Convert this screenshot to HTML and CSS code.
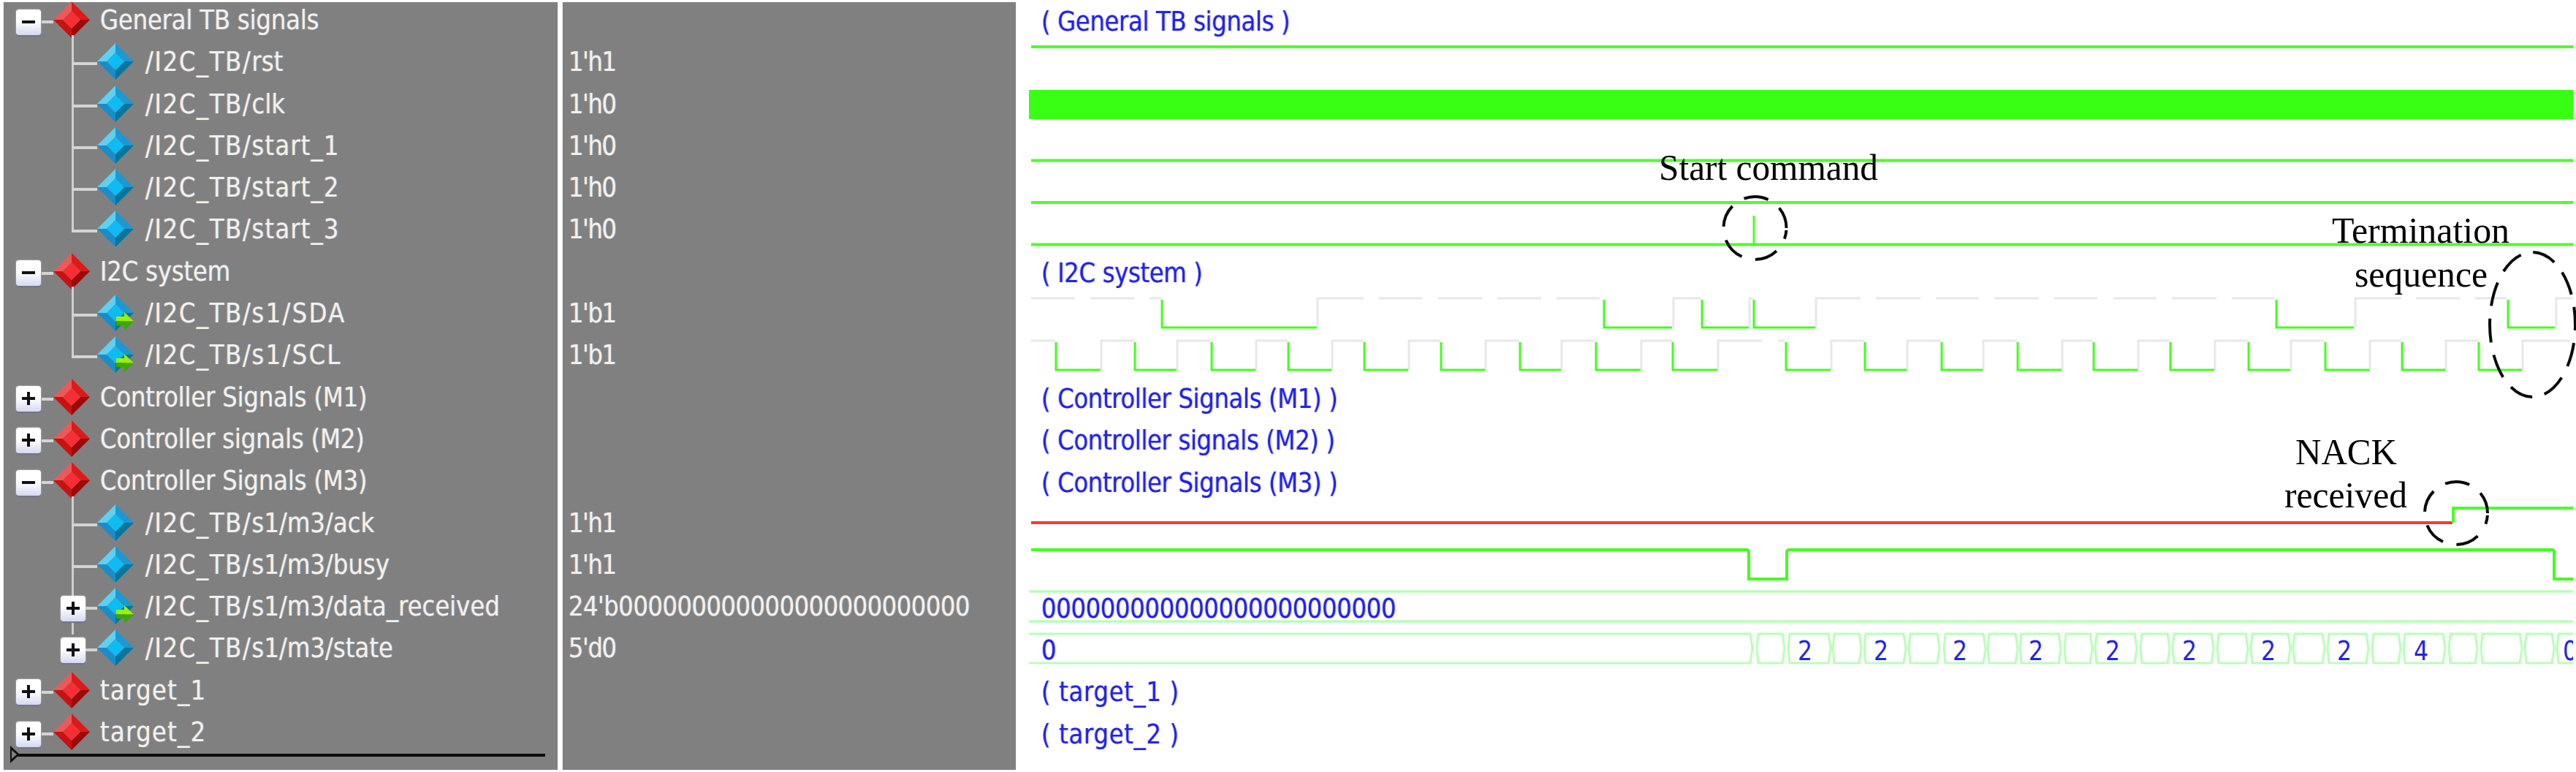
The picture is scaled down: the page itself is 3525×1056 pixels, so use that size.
FILE: index.html
```html
<!DOCTYPE html>
<html lang="en">
<head>
<meta charset="utf-8">
<title>I2C waveform</title>
<link rel="stylesheet" href="styles.css">
</head>
<body>
<svg class="defs" width="0" height="0" aria-hidden="true">
  <symbol id="gem-red" viewBox="0 0 50 50">
    <path fill="#ea5a5a" d="M25 0 0 25 13 25 25 13z"/>
    <path fill="#dc1a1a" d="M25 0 50 25 37 25 25 13z"/>
    <path fill="#9c0a0a" d="M50 25 25 50 25 37 37 25z"/>
    <path fill="#c81212" d="M0 25 25 50 25 37 13 25z"/>
    <path fill="#f52f35" d="M25 13 37 25 25 37 13 25z"/>
  </symbol>
  <symbol id="gem-blue" viewBox="0 0 50 50">
    <path fill="#5fd0f2" d="M25 0 0 25 13 25 25 13z"/>
    <path fill="#1c98d2" d="M25 0 50 25 37 25 25 13z"/>
    <path fill="#07769f" d="M50 25 25 50 25 37 37 25z"/>
    <path fill="#1a8cc8" d="M0 25 25 50 25 37 13 25z"/>
    <path fill="#0cbcf2" d="M25 13 37 25 25 37 13 25z"/>
  </symbol>
  <symbol id="gem-arrow" viewBox="0 0 50 50">
    <path fill="#5fd0f2" d="M25 0 0 25 13 25 25 13z"/>
    <path fill="#1c98d2" d="M25 0 50 25 37 25 25 13z"/>
    <path fill="#07769f" d="M50 25 25 50 25 37 37 25z"/>
    <path fill="#1a8cc8" d="M0 25 25 50 25 37 13 25z"/>
    <path fill="#0cbcf2" d="M25 13 37 25 25 37 13 25z"/>
    <path fill="#9cf000" d="M26 30H37V24L50 36.5H26z"/>
    <path fill="#3aa800" d="M26 36.5H50L37 49V42H26z"/>
  </symbol>
</svg>

<main class="page">
  <section class="panel names">
    <div class="rows">
      <div class="row group"><div class="stub open"><span class="toggle minus"></span></div><svg class="gem"><use href="#gem-red"/></svg><span class="label">General TB signals</span></div>
      <div class="row child"><div class="branch"></div><svg class="gem"><use href="#gem-blue"/></svg><span class="label"><span class="prefix">/I2C_TB/</span>rst</span></div>
      <div class="row child"><div class="branch"></div><svg class="gem"><use href="#gem-blue"/></svg><span class="label"><span class="prefix">/I2C_TB/</span>clk</span></div>
      <div class="row child"><div class="branch"></div><svg class="gem"><use href="#gem-blue"/></svg><span class="label"><span class="prefix">/I2C_TB/</span><span class="wide">start_1</span></span></div>
      <div class="row child"><div class="branch"></div><svg class="gem"><use href="#gem-blue"/></svg><span class="label"><span class="prefix">/I2C_TB/</span><span class="wide">start_2</span></span></div>
      <div class="row child"><div class="branch last"></div><svg class="gem"><use href="#gem-blue"/></svg><span class="label"><span class="prefix">/I2C_TB/</span><span class="wide">start_3</span></span></div>
      <div class="row group"><div class="stub open"><span class="toggle minus"></span></div><svg class="gem"><use href="#gem-red"/></svg><span class="label">I2C system</span></div>
      <div class="row child"><div class="branch"></div><svg class="gem"><use href="#gem-arrow"/></svg><span class="label"><span class="prefix">/I2C_TB/</span><span class="wider">s1/SDA</span></span></div>
      <div class="row child"><div class="branch last"></div><svg class="gem"><use href="#gem-arrow"/></svg><span class="label"><span class="prefix">/I2C_TB/</span><span class="wider">s1/SCL</span></span></div>
      <div class="row group"><div class="stub"><span class="toggle plus"></span></div><svg class="gem"><use href="#gem-red"/></svg><span class="label">Controller Signals (M1)</span></div>
      <div class="row group"><div class="stub"><span class="toggle plus"></span></div><svg class="gem"><use href="#gem-red"/></svg><span class="label">Controller signals (M2)</span></div>
      <div class="row group"><div class="stub open"><span class="toggle minus"></span></div><svg class="gem"><use href="#gem-red"/></svg><span class="label">Controller Signals (M3)</span></div>
      <div class="row child"><div class="branch"></div><svg class="gem"><use href="#gem-blue"/></svg><span class="label"><span class="prefix">/I2C_TB/</span>s1/m3/ack</span></div>
      <div class="row child"><div class="branch"></div><svg class="gem"><use href="#gem-blue"/></svg><span class="label"><span class="prefix">/I2C_TB/</span>s1/m3/busy</span></div>
      <div class="row child"><div class="branch"><span class="toggle plus sub"></span></div><svg class="gem"><use href="#gem-arrow"/></svg><span class="label"><span class="prefix">/I2C_TB/</span>s1/m3/data_received</span></div>
      <div class="row child"><div class="branch last"><span class="toggle plus sub"></span></div><svg class="gem"><use href="#gem-blue"/></svg><span class="label"><span class="prefix">/I2C_TB/</span>s1/m3/state</span></div>
      <div class="row group"><div class="stub"><span class="toggle plus"></span></div><svg class="gem"><use href="#gem-red"/></svg><span class="label target">target_1</span></div>
      <div class="row group"><div class="stub"><span class="toggle plus"></span></div><svg class="gem"><use href="#gem-red"/></svg><span class="label target">target_2</span></div>
    </div>
    <div class="cursor"><span class="cursor-mark"></span></div>
  </section>

  <section class="panel values">
    <div class="rows">
      <div class="row"></div>
      <div class="row"><span class="label">1'h1</span></div>
      <div class="row"><span class="label">1'h0</span></div>
      <div class="row"><span class="label">1'h0</span></div>
      <div class="row"><span class="label">1'h0</span></div>
      <div class="row"><span class="label">1'h0</span></div>
      <div class="row"></div>
      <div class="row"><span class="label">1'b1</span></div>
      <div class="row"><span class="label">1'b1</span></div>
      <div class="row"></div>
      <div class="row"></div>
      <div class="row"></div>
      <div class="row"><span class="label">1'h1</span></div>
      <div class="row"><span class="label">1'h1</span></div>
      <div class="row"><span class="label bits">24'b000000000000000000000000</span></div>
      <div class="row"><span class="label">5'd0</span></div>
    </div>
  </section>

  <section class="wave">
    <div class="rows">
      <div class="row"><span class="label">( General TB signals )</span></div>
      <div class="row"></div><div class="row"></div><div class="row"></div><div class="row"></div><div class="row"></div>
      <div class="row"><span class="label">( I2C system )</span></div>
      <div class="row"></div><div class="row"></div>
      <div class="row"><span class="label">( Controller Signals (M1) )</span></div>
      <div class="row"><span class="label">( Controller signals (M2) )</span></div>
      <div class="row"><span class="label">( Controller Signals (M3) )</span></div>
      <div class="row"></div><div class="row"></div>
      <div class="row"><span class="label bits">000000000000000000000000</span></div>
      <div class="row"><span class="label">0</span></div>
      <div class="row"><span class="label target">( target_1 )</span></div>
      <div class="row"><span class="label target">( target_2 )</span></div>
    </div>
  </section>
</main>

<svg class="traces" width="3525" height="1056" viewBox="0 0 3525 1056">
  <g class="soft">
    <rect class="clk" x="1408" y="123" width="2113" height="40"/>
    <path class="hi" d="M1411 64H3521M1411 219.5H3521M1411 277H3521M1411 334.5H3521"/>
    <path class="thin" d="M2400 295V334"/>

    <path class="idle" d="M1411 408H1471M1492 408H1552M1573 408H1590M1803 448V408H1866M1887 408H1946M1968 408H2028M2049 408H2109M2130 408H2189M2290 448V408H2328M2394 448V408H2399M2485 448V408H2546M2567 408H2628M2649 408H2708M2729 408H2790M2811 408H2870M2892 408H2951M2972 408H3033M3054 408H3113M3223 448V408H3286M3306 408H3366M3387 408H3430M3498 448V408H3521"/>
    <path class="low" d="M1590 410V448H1802M2195 410V448H2288M2329 410V448H2393M2400 410V448H2484M3115 410V448H3221M3432 410V448H3496"/>

    <path class="idle" d="M1411 466H1444M1507 506V466H1552M1611 506V466H1657M1719 506V466H1762M1823 506V466H1866M1928 506V466H1971M2033 506V466H2079M2137 506V466H2183M2246 506V466H2288M2351 506V466H2411M2433 466H2443M2506 506V466H2551M2610 506V466H2656M2714 506V466H2760M2822 506V466H2864M2926 506V466H2969M3031 506V466H3076M3135 506V466H3181M3243 506V466H3286M3347 506V466H3391M3452 506V466H3516"/>
    <path class="low" d="M1445 468V506H1506M1553 468V506H1610M1658 468V506H1718M1763 468V506H1822M1867 468V506H1927M1972 468V506H2032M2080 468V506H2136M2184 468V506H2245M2289 468V506H2350M2444 468V506H2505M2552 468V506H2609M2657 468V506H2713M2761 468V506H2821M2865 468V506H2925M2970 468V506H3030M3077 468V506H3134M3182 468V506H3242M3287 468V506H3346M3392 468V506H3451"/>

    <path class="red" d="M1411 715H3356"/>
    <path class="hi" d="M3357 715V695H3521"/>
    <path class="low busy" d="M1411 752H2391L2393 754V792H2445V754L2447 752H3493L3495 754V792H3521"/>

    <path class="bus" d="M1408 809H3521M1408 850H3521"/>
    <path class="bus state" d="M1408 867H2395l3 20-3 20H1408M2406 867H2439l3 20-3 20H2406l-2-20zM2449 867H2502l3 20-3 20H2449l-2-20zM2510 867H2544l3 20-3 20H2510l-2-20zM2553 867H2605l3 20-3 20H2553l-2-20zM2614 867H2651l3 20-3 20H2614l-2-20zM2662 867H2714l3 20-3 20H2662l-2-20zM2722 867H2758l3 20-3 20H2722l-2-20zM2766 867H2817l3 20-3 20H2766l-2-20zM2827 867H2860l3 20-3 20H2827l-2-20zM2869 867H2921l3 20-3 20H2869l-2-20zM2931 867H2966l3 20-3 20H2931l-2-20zM2975 867H3026l3 20-3 20H2975l-2-20zM3036 867H3073l3 20-3 20H3036l-2-20zM3082 867H3131l3 20-3 20H3082l-2-20zM3140 867H3178l3 20-3 20H3140l-2-20zM3187 867H3238l3 20-3 20H3187l-2-20zM3248 867H3282l3 20-3 20H3248l-2-20zM3291 867H3343l3 20-3 20H3291l-2-20zM3353 867H3387l3 20-3 20H3353l-2-20zM3397 867H3448l3 20-3 20H3397l-2-20zM3457 867H3492l3 20-3 20H3457l-2-20zM3521 867H3501l-2 20 2 20H3521"/>
  </g>

  <text class="digit" x="2470" y="903" textLength="20" lengthAdjust="spacingAndGlyphs">2</text>
  <text class="digit" x="2574" y="903" textLength="20" lengthAdjust="spacingAndGlyphs">2</text>
  <text class="digit" x="2682" y="903" textLength="20" lengthAdjust="spacingAndGlyphs">2</text>
  <text class="digit" x="2786" y="903" textLength="20" lengthAdjust="spacingAndGlyphs">2</text>
  <text class="digit" x="2891" y="903" textLength="20" lengthAdjust="spacingAndGlyphs">2</text>
  <text class="digit" x="2996" y="903" textLength="20" lengthAdjust="spacingAndGlyphs">2</text>
  <text class="digit" x="3104" y="903" textLength="20" lengthAdjust="spacingAndGlyphs">2</text>
  <text class="digit" x="3208" y="903" textLength="20" lengthAdjust="spacingAndGlyphs">2</text>
  <text class="digit" x="3313" y="903" textLength="20" lengthAdjust="spacingAndGlyphs">4</text>
  <text class="digit" x="3517" y="903" textLength="20" lengthAdjust="spacingAndGlyphs">0</text>
  <rect class="mask" x="3521" y="860" width="4" height="50"/>

  <ellipse class="ring round" cx="2401.5" cy="312" rx="43" ry="43"/>
  <ellipse class="ring tall" cx="3465.5" cy="444" rx="58.5" ry="99"/>
  <ellipse class="ring round" cx="3361" cy="702" rx="43" ry="43"/>

  <text class="note" x="2270" y="246" textLength="300" lengthAdjust="spacingAndGlyphs">Start command</text>
  <text class="note" x="3191" y="332" textLength="243" lengthAdjust="spacingAndGlyphs">Termination</text>
  <text class="note" x="3222" y="392" textLength="182" lengthAdjust="spacingAndGlyphs">sequence</text>
  <text class="note" x="3141" y="635" textLength="139" lengthAdjust="spacingAndGlyphs">NACK</text>
  <text class="note" x="3126" y="694" textLength="168" lengthAdjust="spacingAndGlyphs">received</text>
</svg>
</body>
</html>
```

FILE: styles.css
```css
* { box-sizing: border-box; }

html, body {
  margin: 0;
  background: #fff;
}

body {
  position: relative;
  width: 3525px;
  height: 1056px;
  overflow: hidden;
}

.defs { position: absolute; }

.page {
  display: flex;
  gap: 7px;
  height: 1056px;
  padding: 3px 0 3px 5px;
  font-family: "DejaVu Sans Condensed", "DejaVu Sans", sans-serif;
  font-stretch: condensed;
  font-size: 38px;
}

.panel {
  position: relative;
  background: #808080;
  box-shadow: 0 0 1px #aaa;
  height: 100%;
}

.names { width: 758px; }
.values { width: 620px; }
.wave { flex: 1; }

.rows { margin-top: -4.65px; }

.row {
  position: relative;
  display: flex;
  align-items: center;
  height: 57.3px;
}

.label {
  display: inline-block;
  white-space: nowrap;
  line-height: 40px;
  color: #f1f1f1;
  transform: scaleX(.947);
  transform-origin: left center;
  text-shadow: -1px 0 1px rgba(255, 190, 130, .55), 1px 0 1px rgba(130, 200, 255, .55);
}

.prefix { letter-spacing: 1.7px; }
.wide { letter-spacing: 1.2px; }
.wider { letter-spacing: 2.4px; }

.values .row { padding-left: 8px; }
.values .label { letter-spacing: -1.6px; }
.values .label.bits { letter-spacing: -.6px; }

.wave .rows { margin-top: -2.2px; }
.wave .row { padding-left: 28px; }
.wave .label {
  color: #2222ea;
  letter-spacing: -.4px;
  text-shadow: -1px 0 1px rgba(120, 120, 255, .45), 1px 0 1px rgba(120, 120, 255, .45);
}
.wave .label.bits { letter-spacing: -.4px; }
.wave .label.target { letter-spacing: .7px; }

.gem {
  flex: none;
  width: 50px;
  height: 50px;
  overflow: visible;
}

.group .label { margin-left: 14px; letter-spacing: -.2px; }
.group .label.target { letter-spacing: 1.4px; }
.child .label { margin-left: 16px; }

/* tree column of a group row: toggle, then a short link to the gem */
.stub {
  position: relative;
  flex: none;
  display: flex;
  align-items: center;
  width: 68px;
  height: 100%;
  padding-left: 17px;
}

.stub::after {
  content: "";
  position: absolute;
  left: 52px;
  top: calc(50% + 1px);
  width: 16px;
  height: 4px;
  background: #d4d4d4;
}

.stub.open::before {
  content: "";
  position: absolute;
  left: 93px;
  top: 50px;
  width: 3px;
  height: 10px;
  background: #cfcfcf;
}

/* tree column of a child row */
.branch {
  position: relative;
  flex: none;
  display: flex;
  align-items: center;
  width: 128px;
  height: 100%;
  padding-left: 78px;
}

.branch::before {
  content: "";
  position: absolute;
  left: 93px;
  top: 0;
  bottom: 0;
  width: 3px;
  background: #cfcfcf;
}

.branch.last::before { bottom: 25px; }

.branch::after {
  content: "";
  position: absolute;
  left: 93px;
  top: calc(50% + 1px);
  width: 35px;
  height: 4px;
  background: #d4d4d4;
}

.branch.last:has(.sub)::before { bottom: auto; height: 10px; }

.toggle {
  position: relative;
  z-index: 1;
  flex: none;
  width: 34px;
  height: 35px;
  margin-top: 6px;
  border-radius: 4px;
  background: linear-gradient(#fff 0 45%, #d5d9f0);
  box-shadow: 0 2px 1px #6f7488, 0 0 2px #ddd;
}

.toggle::before {
  content: "";
  position: absolute;
  left: 8px;
  top: 15px;
  width: 18px;
  height: 4px;
  background: #111;
}

.toggle.plus::after {
  content: "";
  position: absolute;
  left: 15px;
  top: 8px;
  width: 4px;
  height: 18px;
  background: #111;
}

.sub { margin-top: 6px; }

/* cursor rule at the bottom of the name column */
.cursor {
  position: absolute;
  left: 16px;
  right: 17px;
  bottom: 18px;
  height: 4px;
  background: #0c0c0c;
}

.cursor-mark {
  position: absolute;
  left: -7px;
  top: -11px;
  width: 0;
  height: 0;
  border-left: 13px solid #111;
  border-top: 12px solid transparent;
  border-bottom: 12px solid transparent;
}

.cursor-mark::after {
  content: "";
  position: absolute;
  left: -11px;
  top: -6px;
  width: 0;
  height: 0;
  border-left: 7px solid #808080;
  border-top: 6px solid transparent;
  border-bottom: 6px solid transparent;
}

/* waveform canvas */
.traces {
  position: absolute;
  left: 0;
  top: 0;
  pointer-events: none;
}

.soft { filter: blur(.5px); }

.traces path { fill: none; }

.clk { fill: #38ff14; }
.hi { stroke: #4dff2a; stroke-width: 4; }
.thin { stroke: #4dff2a; stroke-width: 3; }
.idle { stroke: #e8e8e8; stroke-width: 3; }
.low { stroke: #44ff1e; stroke-width: 3; }
.busy { stroke-width: 4; }
.red { stroke: #ff3538; stroke-width: 4; }
.bus { stroke: #b9ffb9; stroke-width: 3.5; }
.state { stroke-width: 3; }

.digit {
  font-family: "DejaVu Sans Condensed", "DejaVu Sans", sans-serif;
  font-stretch: condensed;
  font-size: 38px;
  text-anchor: middle;
  fill: #2222ea;
}

.mask { fill: #fff; }

.ring {
  fill: none;
  stroke: #0a0a0a;
  stroke-width: 4;
}

.round { stroke-dasharray: 0 3 12 20 32 19 32 19 31 19 34 19 31; }
.tall { stroke-dasharray: 33 17.3; stroke-dashoffset: 25; }

.note {
  font-family: "Liberation Serif", "Times New Roman", serif;
  font-size: 51px;
  fill: #000;
}
```
